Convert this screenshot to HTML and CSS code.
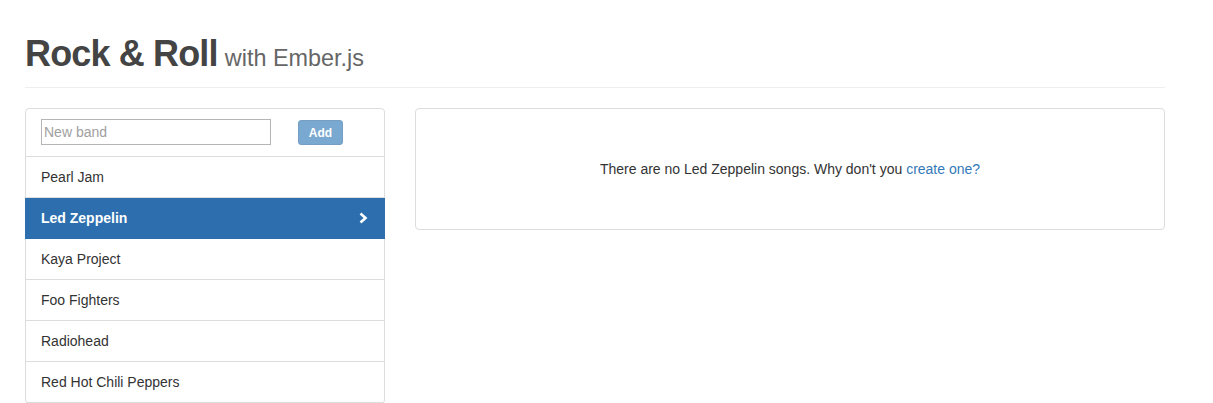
FILE: index.html
```html
<!DOCTYPE html>
<html>
<head>
<meta charset="utf-8">
<link rel="stylesheet" href="styles.css">
</head>
<body>
<div class="container">
  <div class="page-header">
    <h1>Rock &amp; Roll <small>with Ember.js</small></h1>
  </div>
  <div class="row">
    <div class="col-left">
      <div class="panel">
        <div class="panel-heading">
          <input class="band-input" type="text" placeholder="New band">
          <button class="btn-add" disabled>Add</button>
        </div>
        <div class="list-group">
          <a class="list-group-item">Pearl Jam</a>
          <a class="list-group-item active">Led Zeppelin
            <svg class="chevron" width="10" height="12" viewBox="0 0 10 12"><path d="M2.5 1.5 L7.5 6 L2.5 10.5" fill="none" stroke="#fff" stroke-width="2.6" stroke-linejoin="miter"/></svg>
          </a>
          <a class="list-group-item">Kaya Project</a>
          <a class="list-group-item">Foo Fighters</a>
          <a class="list-group-item">Radiohead</a>
          <a class="list-group-item">Red Hot Chili Peppers</a>
        </div>
      </div>
    </div>
    <div class="col-right">
      <div class="panel panel-body">
        <p class="empty">There are no Led Zeppelin songs. Why don't you <a class="link">create one?</a></p>
      </div>
    </div>
  </div>
</div>
</body>
</html>
```
FILE: styles.css
```css
* { box-sizing: border-box; }
html, body { margin: 0; padding: 0; background: #fff; }
body {
  font-family: "Liberation Sans", Arial, sans-serif;
  font-size: 14px;
  line-height: 20px;
  color: #333;
}
.container {
  width: 1170px;
  margin-left: 10px;
  padding: 0 15px;
}
.page-header {
  margin: 0 0 20px;
  padding-top: 34px;
  padding-bottom: 9px;
  border-bottom: 1px solid #eee;
}
.page-header h1 {
  margin: 0;
  font-size: 36px;
  line-height: 40px;
  font-weight: 700;
  color: #444;
  letter-spacing: -0.85px;
}
.page-header h1 small {
  font-size: 23.4px;
  font-weight: 400;
  color: #666;
  letter-spacing: 0;
  margin-left: -2px;
}
.row {
  display: flex;
  gap: 30px;
}
.col-left { width: 360px; flex: none; }
.col-right { width: 750px; flex: none; }
.panel {
  border: 1px solid #ddd;
  border-radius: 4px;
  background: #fff;
}
.panel-heading {
  display: flex;
  align-items: flex-start;
  padding: 10px 15px;
  border-bottom: 1px solid #ddd;
  height: 48px;
}
.band-input {
  width: 230px;
  height: 26px;
  border: 1px solid #b5b5b5;
  font-family: "Liberation Sans", Arial, sans-serif;
  font-size: 14px;
  padding: 0 2px;
  color: #333;
  outline: none;
}
.band-input::placeholder { color: #a0a0a0; }
.btn-add {
  margin-left: 27px;
  margin-top: 1px;
  width: 45px;
  height: 25px;
  border: 1px solid #2e6da4;
  border-radius: 3px;
  background: #337ab7;
  opacity: .65;
  color: #fff;
  font-family: "Liberation Sans", Arial, sans-serif;
  font-size: 12px;
  font-weight: 700;
  padding: 0;
}
.list-group { display: flex; flex-direction: column; }
.list-group-item {
  display: flex;
  align-items: center;
  justify-content: space-between;
  height: 41px;
  padding: 0 15px;
  border-bottom: 1px solid #ddd;
  color: #333;
  font-size: 14px;
}
.list-group-item.active {
  background: #2d6fae;
  border-bottom-color: #2d6fae;
  color: #fff;
  font-weight: 700;
  margin: 0 -1px;
  padding: 0 16px;
}
.chevron { margin-right: 1px; }
.panel-body {
  padding: 50px 15px;
  text-align: center;
}
.empty { margin: 0; }
.link { color: #337ab7; text-decoration: none; }
```
